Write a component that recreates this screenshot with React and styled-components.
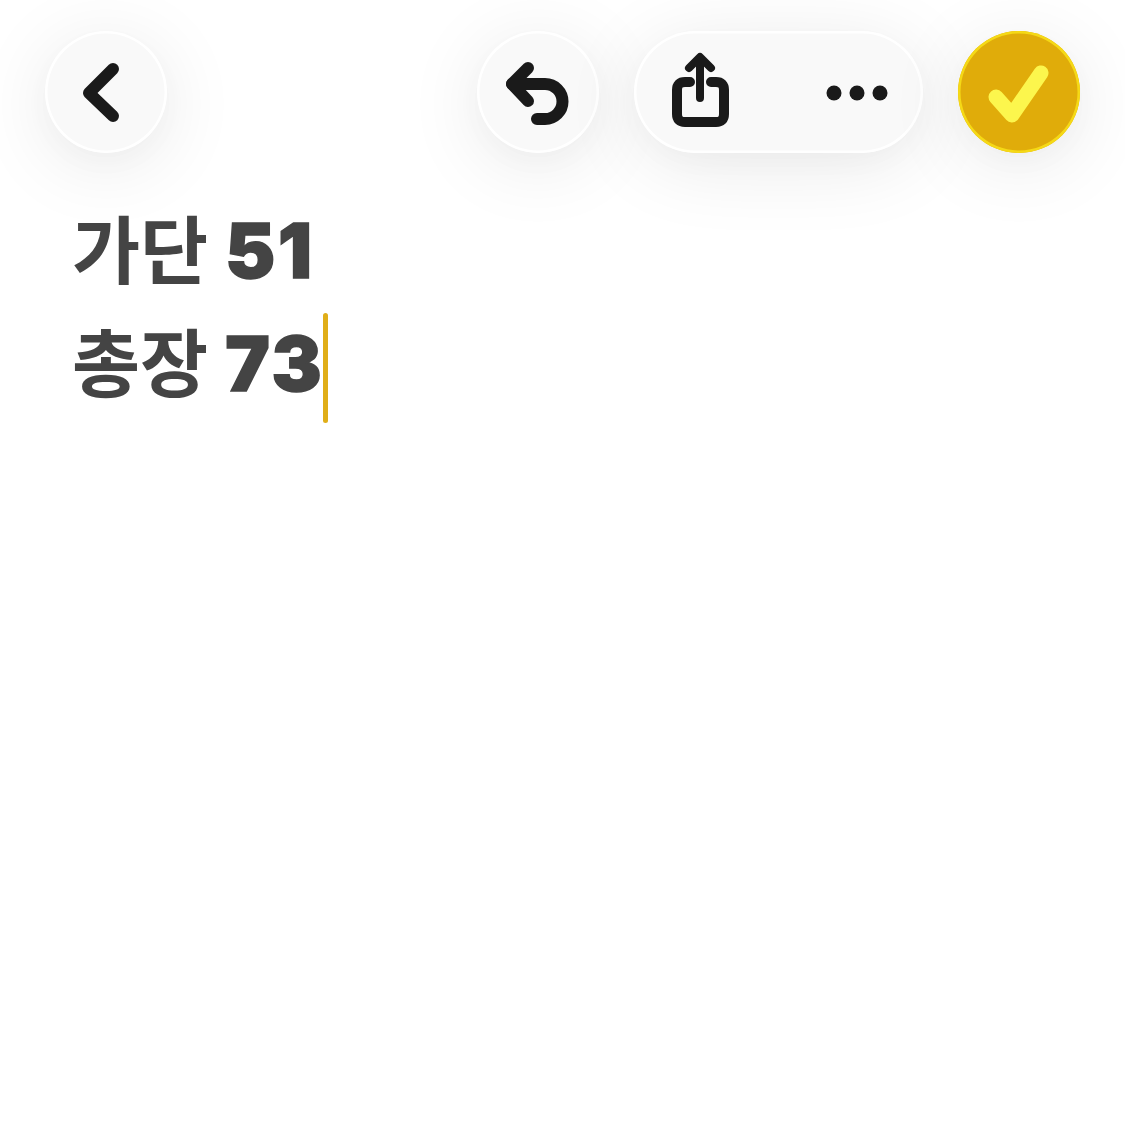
import React from 'react'
import styled, { createGlobalStyle } from 'styled-components'

const GlobalStyle = createGlobalStyle`
  html, body {
    margin: 0;
    background: #fff;
  }
`

const softShadow = `
  0 10px 30px rgba(0, 0, 0, 0.02),
  0 12px 80px rgba(0, 0, 0, 0.09)
`

const Page = styled.div`
  width: 1125px;
  height: 1125px;
  padding: 31px 45px 0;
  box-sizing: border-box;
  background: #fff;
  overflow: hidden;
`

const Toolbar = styled.div`
  display: flex;
  align-items: center;
  gap: 35px;
`

const RoundButton = styled.div`
  width: 122px;
  height: 122px;
  flex: none;
  border-radius: 50%;
  background: ${(p) => (p.$accent ? '#e0ac0a' : '#f9f9f9')};
  box-shadow:
    inset 0 0 0 2.5px ${(p) => (p.$accent ? '#f5d916' : '#ffffff')},
    ${softShadow};
`

const BackButton = styled(RoundButton)`
  margin-right: auto;
`

const Pill = styled.div`
  width: 289px;
  height: 122px;
  flex: none;
  padding: 0 5px;
  box-sizing: border-box;
  display: flex;
  justify-content: space-between;
  border-radius: 61px;
  background: #f9f9f9;
  box-shadow:
    inset 0 0 0 2.5px #ffffff,
    ${softShadow};
`

const Icon = styled.svg`
  display: block;
  width: 122px;
  height: 122px;
  fill: none;
  stroke: ${(p) => p.$color || '#1a1a1a'};
  stroke-width: ${(p) => p.$weight || 12}px;
  stroke-linecap: round;
  stroke-linejoin: round;
`

const Note = styled.div`
  margin-top: 45px;
  padding-left: 27px;
  color: #444444;
  font-family: Inter, "Noto Sans CJK KR", sans-serif;
`

const Line = styled.div`
  display: flex;
  align-items: center;
  height: 113px;
`

const Hangul = styled.span`
  font-family: "Noto Sans CJK KR", sans-serif;
  font-size: 74px;
  font-weight: 700;
  margin-right: 17px;
  margin-bottom: 18px;
`

const Digits = styled.span`
  font-size: 75px;
  font-weight: 900;
  letter-spacing: 3px;
  -webkit-text-stroke: 1.5px #444444;
  margin-bottom: 8px;
`

const Caret = styled.span`
  width: 5px;
  height: 110px;
  margin-left: -2px;
  border-radius: 3px;
  background: #e0ae18;
`

export default function App() {
  return (
    <Page>
      <GlobalStyle />
      <Toolbar>
        <BackButton>
          <Icon viewBox="0 0 122 122">
            <path d="M68 38 L44 62 L68 85" />
          </Icon>
        </BackButton>
        <RoundButton>
          <Icon viewBox="0 0 122 122">
            <path d="M51 37 L35 53 L51 70" />
            <path d="M35 53 H68 A17.5 17.5 0 0 1 68 88 H60" />
          </Icon>
        </RoundButton>
        <Pill>
          <Icon viewBox="0 0 122 122" $weight={10}>
            <path d="M51 51 H46 Q38 51 38 59 V83 Q38 91 46 91 H77 Q85 91 85 83 V59 Q85 51 77 51 H72" />
            <path d="M61 67 V28 M50 37 L61 26 L72 37" strokeWidth="8" />
          </Icon>
          <Icon viewBox="0 0 122 122">
            <g fill="#1a1a1a" stroke="none">
              <circle cx="38" cy="62" r="7.5" />
              <circle cx="61" cy="62" r="7.5" />
              <circle cx="84" cy="62" r="7.5" />
            </g>
          </Icon>
        </Pill>
        <RoundButton $accent>
          <Icon viewBox="0 0 122 122" $color="#fcf64d" $weight={15}>
            <path d="M38 66 L54 84 L83 42" />
          </Icon>
        </RoundButton>
      </Toolbar>
      <Note>
        <Line>
          <Hangul>가단</Hangul>
          <Digits>51</Digits>
        </Line>
        <Line>
          <Hangul>총장</Hangul>
          <Digits>73</Digits>
          <Caret />
        </Line>
      </Note>
    </Page>
  )
}
